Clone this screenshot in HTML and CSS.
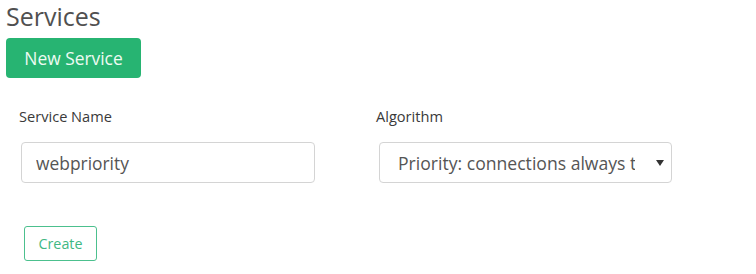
FILE: index.html
```html
<!DOCTYPE html>
<html>
<head>
<meta charset="utf-8">
<link rel="stylesheet" href="styles.css">
</head>
<body>
<div class="page">
  <h1 class="title">Services</h1>
  <button class="btn-new">New Service</button>
  <form class="form">
    <div class="row">
      <div class="field">
        <label class="label">Service Name</label>
        <input class="input" type="text" value="webpriority">
      </div>
      <div class="field field-alg">
        <label class="label">Algorithm</label>
        <div class="select-wrap">
          <select class="select">
            <option>Priority: connections always to the first available server</option>
          </select>
        </div>
      </div>
    </div>
    <button type="button" class="btn-create">Create</button>
  </form>
</div>
</body>
</html>
```
FILE: styles.css
```css
* { box-sizing: border-box; }
html, body { margin: 0; padding: 0; background: #fff; }
body { font-family: "Open Sans", "Liberation Sans", sans-serif; }
.page { padding-left: 6px; }
.title {
  margin: -1px 0 0 0;
  font-size: 25px;
  font-weight: 400;
  line-height: 34px;
  color: #505050;
}
.btn-new {
  display: block;
  margin-top: 5px;
  width: 135px;
  height: 40px;
  border: 0;
  border-radius: 4px;
  background: #27b472;
  color: #eefbf2;
  font-family: inherit;
  font-size: 17.4px;
  padding: 0;
}
.form { margin-top: 29px; }
.row { display: flex; }
.field { width: 357px; padding-left: 13px; display: flex; flex-direction: column; }
.label {
  font-size: 14.6px;
  line-height: 18px;
  color: #3a3a3a;
}
.input, .select-wrap { margin-top: 17px; margin-left: 2px; }
.input {
  width: 294px;
  height: 41px;
  border: 1px solid #d4d4d4;
  border-radius: 4px;
  padding: 0 14px;
  font-family: inherit;
  font-size: 17.4px;
  color: #555;
  outline: none;
}
.field-alg .select-wrap { margin-left: 3px; }
.select-wrap { position: relative; width: 293px; height: 41px; }
.select {
  -webkit-appearance: none;
  appearance: none;
  width: 100%;
  height: 100%;
  border: 1px solid #d4d4d4;
  border-radius: 4px;
  background: #fff;
  padding: 0 36px 0 18px;
  font-family: inherit;
  font-size: 17.6px;
  color: #555;
  outline: none;
}
.select-wrap::after {
  content: "";
  position: absolute;
  right: 8px;
  top: 18px;
  border-left: 4px solid transparent;
  border-right: 4px solid transparent;
  border-top: 6px solid #333;
  pointer-events: none;
}
.btn-create {
  display: block;
  margin-top: 43px;
  margin-left: 18px;
  width: 73px;
  height: 35px;
  border: 1px solid #4cc08e;
  border-radius: 3px;
  background: #fff;
  color: #3fb883;
  font-family: inherit;
  font-size: 14.3px;
  padding: 0;
}
```
